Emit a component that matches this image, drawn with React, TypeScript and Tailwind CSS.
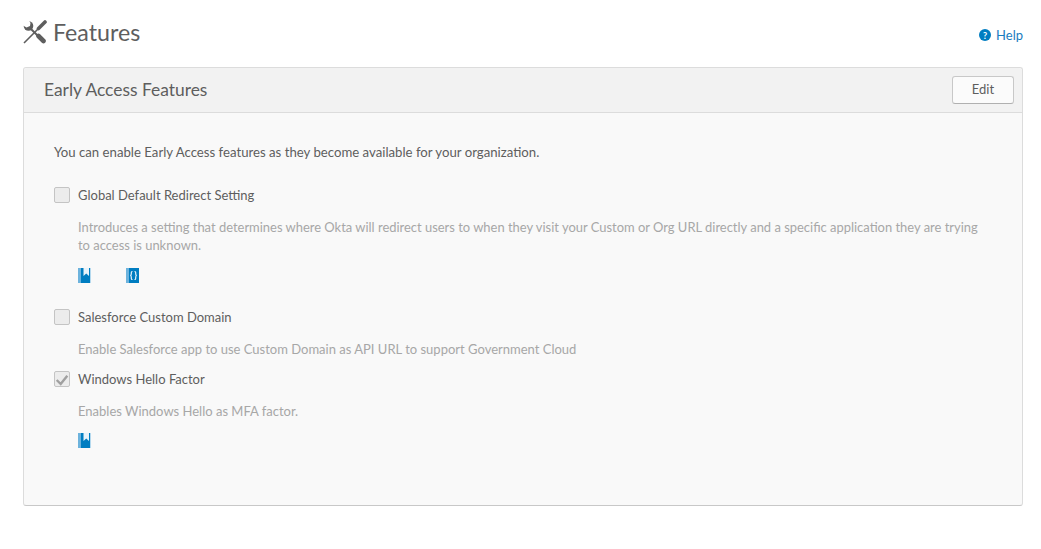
const BookIcon = () => (
  <svg width="13" height="15" viewBox="0 0 13 15" className="block">
    <rect x="0" y="0" width="3" height="15" fill="#6db3dd" />
    <rect x="3" y="0" width="10" height="15" fill="#007dc1" />
    <path d="M5.500 0H11v8L8.250 5.500 5.500 8z" fill="#e8f3fa" />
    <rect x="12" y="0" width="1" height="15" fill="#b5d9ee" />
  </svg>
)

const CodeIcon = () => (
  <svg width="13" height="15" viewBox="0 0 13 15" className="block">
    <rect x="0" y="0" width="3" height="15" fill="#6db3dd" />
    <rect x="3" y="0" width="10" height="15" fill="#007dc1" />
    <path d="M6.500 3.500C5.200 3.500 5.300 4.500 5.300 5.700S5.200 7.300 4.300 7.500C5.200 7.700 5.300 8.100 5.300 9.300S5.200 11.500 6.500 11.500M8.500 3.500C9.800 3.500 9.700 4.500 9.700 5.700S9.800 7.300 10.700 7.500C9.800 7.700 9.700 8.100 9.700 9.300S9.800 11.500 8.500 11.500" fill="none" stroke="#e8f3fa" strokeWidth="1.200" />
  </svg>
)

const ToolsIcon = () => (
  <svg width="24" height="24" viewBox="0 0 24 24" className="block shrink-0">
    {/* wrench head, jaw opens to the upper left */}
    <circle cx="5.500" cy="6" r="4.800" fill="#5e5e5e" />
    <path d="M-1 5 3.500 7.500 7 6 7.500 3 5 -1H-1Z" fill="#fff" />
    <path d="M7 8 14.500 15.500" stroke="#5e5e5e" strokeWidth="2" />
    <path d="M15.500 16 20.500 21" stroke="#5e5e5e" strokeWidth="4.600" strokeLinecap="round" />
    {/* screwdriver */}
    <path d="M22 2 15.500 8.500" stroke="#5e5e5e" strokeWidth="3.600" strokeLinecap="round" />
    <path d="M15.500 8.500 1 23" stroke="#5e5e5e" strokeWidth="1.600" />
  </svg>
)

const Checkbox = ({ checked }: { checked?: boolean }) => (
  <span className="flex h-[16px] w-[16px] shrink-0 items-center justify-center rounded-[2px] border border-[#c4c4c4] bg-[#ececec]">
    {checked && (
      <svg width="14" height="14" viewBox="0 0 14 14">
        <path d="M1.700 8 5.700 12 12.300 3.700" fill="none" stroke="#a0a0a0" strokeWidth="2.400" />
      </svg>
    )}
  </span>
)

const Feature = ({ label, checked, children, className }: { label: string; checked?: boolean; children: React.ReactNode; className?: string }) => (
  <div className={className}>
    <div className="flex h-[16px] items-center gap-[8px]">
      <Checkbox checked={checked} />
      <span className="text-[13px] leading-[16px] text-[#5e5e5e]">{label}</span>
    </div>
    <div className="pl-[24px]">{children}</div>
  </div>
)

export default function App() {
  return (
    <div className="h-[549px] w-[1041px] overflow-hidden bg-white px-[23px] pt-[19px] font-['Lato','Liberation_Sans',sans-serif]">
      <div className="-mr-[5px] flex h-[48px] items-start">
        <div className="flex items-center gap-[6px]">
          <ToolsIcon />
          <h1 className="text-[23.200px] leading-[26px] font-normal text-[#5e5e5e]">Features</h1>
        </div>
        <a className="mt-[8px] ml-auto flex items-center gap-[5px] text-[13px] leading-[16px] text-[#1a7cc0]">
          <span className="flex h-[12px] w-[12px] items-center justify-center rounded-full bg-[#007dc1] text-[9px] leading-none font-bold text-white">?</span>
          Help
        </a>
      </div>
      <div className="h-[439px] w-[1000px] rounded-[3px] border border-[#dcdcdc] border-b-[#c8c8c8] bg-[#f9f9f9]">
        <div className="flex h-[45px] items-center justify-between rounded-t-[3px] border-b border-[#dcdcdc] bg-[#f2f2f2] pr-[8px] pl-[20px]">
          <h2 className="text-[17.400px] font-normal text-[#5e5e5e]">Early Access Features</h2>
          <button className="h-[28px] w-[62px] rounded-[3px] border border-[#c8c8c8] border-b-[#b0b0b0] bg-[#fbfbfb] text-[13px] text-[#5e5e5e]">Edit</button>
        </div>
        <div className="px-[30px] pt-[31px]">
          <p className="text-[13.200px] leading-[16px] text-[#5e5e5e]">You can enable Early Access features as they become available for your organization.</p>
          <Feature label="Global Default Redirect Setting" className="mt-[27px]">
            <p className="mt-[15px] w-[910px] text-[12.950px] leading-[18px] text-[#a7a7a7]">
              Introduces a setting that determines where Okta will redirect users to when they visit your Custom or Org URL directly and a specific application they are trying to access is unknown.
            </p>
            <div className="mt-[14px] flex gap-[35px]">
              <BookIcon />
              <CodeIcon />
            </div>
          </Feature>
          <Feature label="Salesforce Custom Domain" className="mt-[26px]">
            <p className="mt-[15px] text-[13px] leading-[18px] text-[#a7a7a7]">Enable Salesforce app to use Custom Domain as API URL to support Government Cloud</p>
          </Feature>
          <Feature label="Windows Hello Factor" checked className="mt-[13px]">
            <p className="mt-[15px] text-[13px] leading-[18px] text-[#a7a7a7]">Enables Windows Hello as MFA factor.</p>
            <div className="mt-[13px]">
              <BookIcon />
            </div>
          </Feature>
        </div>
      </div>
    </div>
  )
}
